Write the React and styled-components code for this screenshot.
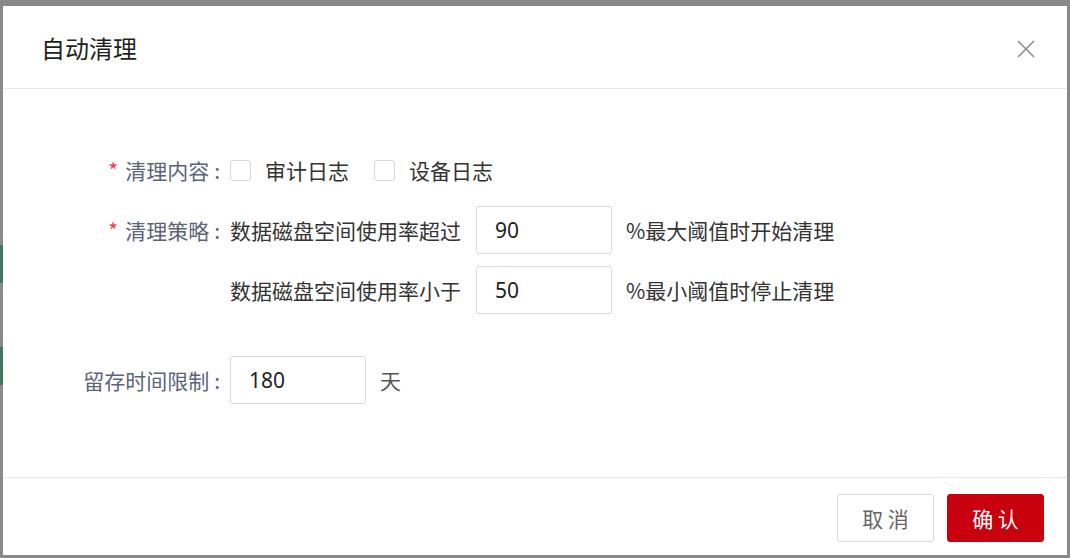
import React from "react";
import styled, {createGlobalStyle} from "styled-components";

const GlobalStyle = createGlobalStyle`
  html, body {
    margin: 0;
    padding: 0;
    background: #898989;
  }
  body {
    font-family: "Noto Sans", "Noto Sans CJK SC", sans-serif;
  }
`;

const Screen = styled.div`
  width: 1070px;
  height: 558px;
  display: flex;
  align-items: flex-start;
  background: #898989;
  overflow: hidden;
`;

// the page behind the mask, barely visible at the left edge
const PeekColumn = styled.div`
  width: 3px;
  display: flex;
  flex-direction: column;
  padding-top: 245px;
  gap: 64px;
`;

const PeekTag = styled.div`
  height: 38px;
  background: #43765f;
`;

const Dialog = styled.div`
  margin-top: 6px;
  width: 1064px;
  height: 549px;
  background: #fff;
  display: flex;
  flex-direction: column;
`;

const Header = styled.div`
  height: 82px;
  display: flex;
  align-items: center;
  justify-content: space-between;
  padding: 0 31px 0 38px;
  border-bottom: 1px solid #e8e8e8;
`;

const Title = styled.div`
  font-size: 24px;
  color: #1f1f1f;
  font-family: "Noto Sans CJK SC", sans-serif;
`;

const CloseButton = styled.button`
  border: none;
  background: none;
  padding: 0;
  margin-top: 4px;
  width: 20px;
  height: 20px;
  display: flex;
  align-items: center;
  justify-content: center;
  cursor: pointer;
`;

const Body = styled.div`
  flex: 1;
  padding-top: 57px;
  display: flex;
  flex-direction: column;
`;

const FormRow = styled.div`
  display: flex;
  align-items: center;
  height: 48px;
  margin-bottom: ${(p) => p.$gap || 12}px;
`;

const Label = styled.div`
  width: 217px;
  padding-right: 10px;
  text-align: right;
  font-size: 21px;
  color: #5b6479;
  font-family: "Noto Sans CJK SC", sans-serif;
  white-space: nowrap;
`;

const Colon = styled.span`
  margin-left: 5px;
`;

const Star = styled.span`
  color: #e8414f;
  margin-right: 7px;
  font-size: 21px;
`;

const Text = styled.span`
  font-size: 21px;
  color: #333;
  font-family: "Noto Sans CJK SC", sans-serif;
  white-space: nowrap;
  margin-right: ${(p) => p.$mr || 0}px;
`;

const CheckLabel = styled.label`
  display: flex;
  align-items: center;
  gap: 14px;
  margin-right: 25px;
`;

const Box = styled.span`
  box-sizing: border-box;
  width: 21px;
  height: 21px;
  border: 1px solid #d9d9d9;
  border-radius: 3px;
  background: #fff;
`;

const NumberInput = styled.input`
  box-sizing: border-box;
  width: ${(p) => p.$w || 136}px;
  height: 48px;
  border: 1px solid #d9d9d9;
  border-radius: 3px;
  padding: 0 18px;
  font-size: 21px;
  font-family: "Noto Sans", sans-serif;
  color: #222;
  outline: none;
  margin-right: ${(p) => p.$mr || 14}px;
`;

const Footer = styled.div`
  height: 78px;
  border-top: 1px solid #e8e8e8;
  display: flex;
  align-items: flex-start;
  justify-content: flex-end;
  gap: 13px;
  padding: 16px 23px 0 0;
  box-sizing: border-box;
`;

const Button = styled.button`
  width: 97px;
  height: 48px;
  border-radius: 3px;
  font-size: 21px;
  font-family: "Noto Sans CJK SC", sans-serif;
  cursor: pointer;
  border: 1px solid ${(p) => (p.$primary ? "#c9000d" : "#d9d9d9")};
  background: ${(p) => (p.$primary ? "#c9000d" : "#fff")};
  color: ${(p) => (p.$primary ? "#fff" : "#666")};
`;

const Checkbox = ({children}) => (
    <CheckLabel>
        <Box/>
        <Text>{children}</Text>
    </CheckLabel>
);

const App = () => {
    return (
        <Screen>
            <GlobalStyle/>
            <PeekColumn>
                <PeekTag/>
                <PeekTag/>
            </PeekColumn>
            <Dialog>
                <Header>
                    <Title>自动清理</Title>
                    <CloseButton>
                        <svg width="18" height="18" viewBox="0 0 18 18">
                            <path d="M1 1 L17 17 M17 1 L1 17" stroke="#8c8c8c" strokeWidth="1.6" fill="none"/>
                        </svg>
                    </CloseButton>
                </Header>
                <Body>
                    <FormRow>
                        <Label><Star>*</Star>清理内容<Colon>:</Colon></Label>
                        <Checkbox>审计日志</Checkbox>
                        <Checkbox>设备日志</Checkbox>
                    </FormRow>
                    <FormRow>
                        <Label><Star>*</Star>清理策略<Colon>:</Colon></Label>
                        <Text $mr={15}>数据磁盘空间使用率超过</Text>
                        <NumberInput defaultValue="90"/>
                        <Text>%最大阈值时开始清理</Text>
                    </FormRow>
                    <FormRow $gap={42}>
                        <Label/>
                        <Text $mr={15}>数据磁盘空间使用率小于</Text>
                        <NumberInput defaultValue="50"/>
                        <Text>%最小阈值时停止清理</Text>
                    </FormRow>
                    <FormRow>
                        <Label>留存时间限制<Colon>:</Colon></Label>
                        <NumberInput defaultValue="180"/>
                        <Text style={{color: "#555"}}>天</Text>
                    </FormRow>
                </Body>
                <Footer>
                    <Button>取 消</Button>
                    <Button $primary>确 认</Button>
                </Footer>
            </Dialog>
        </Screen>
    );
};

export default App;
